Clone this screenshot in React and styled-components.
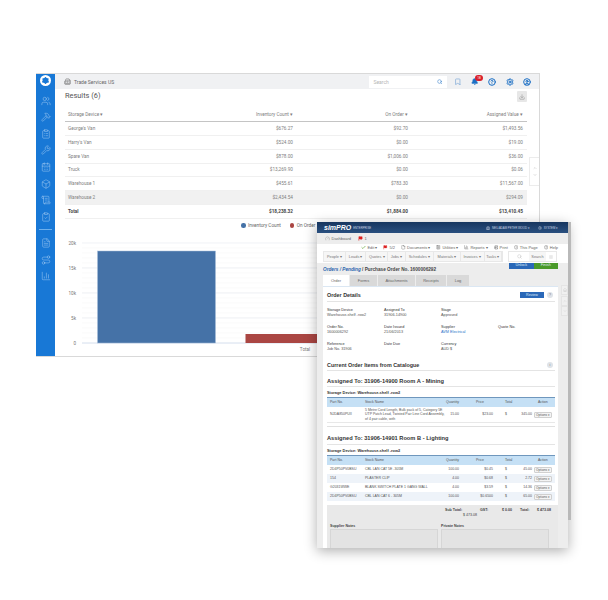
import React from 'react';
import styled, { createGlobalStyle } from 'styled-components';
import {
  Users, Hammer, ClipboardList, Wrench, CalendarDays, Box, ScrollText, ClipboardCheck,
  FileText, Route, BarChart3, Building2, Search, Bookmark, Bell, CircleHelp, Settings,
  CircleUser, Download, ChevronUp, ChevronDown, Home, Flag, Check, File, Printer, Info,
  Calculator, Gauge, Menu,
} from 'lucide-react';

const GlobalStyle = createGlobalStyle`
  html, body { margin: 0; padding: 0; background: #fff; }
  body { font-family: Roboto, "Liberation Sans", sans-serif; }
  #root { width: 608px; height: 600px; }
`;

const rows = [
  ["George's Van", '$676.27', '$92.70', '$1,493.56'],
  ["Harry's Van", '$524.00', '$0.00', '$19.00'],
  ['Spare Van', '$878.00', '$1,006.00', '$36.00'],
  ['Truck', '$13,269.90', '$0.00', '$0.06'],
  ['Warehouse 1', '$455.61', '$783.30', '$11,567.00'],
  ['Warehouse 2', '$2,434.54', '$0.00', '$294.09'],
];

const sideIcons = [Users, Hammer, ClipboardList, Wrench, CalendarDays, Box, ScrollText, ClipboardCheck];
const sideIconsLower = [FileText, Route, BarChart3];

const navItems = [
  ['People', 23], ['Leads', 21], ['Quotes', 23], ['Jobs', 18], ['Schedules', 30],
  ['Materials', 28], ['Invoices', 25], ['Tasks', 18],
];

const tabs = [
  ['Order', 26, true], ['Forms', 27], ['Attachments', 37], ['Receipts', 30], ['Log', 22],
];

const details = [
  ['Storage Device', 'Warehouse-shelf -row2'], ['Assigned To', '31906-14900'], ['Stage', 'Approved'], [null, null],
  ['Order No.', '1600006292'], ['Date Issued', '21/06/2013'], ['Supplier', 'AVM Electrical', true], ['Quote No.', ''],
  ['Reference', 'Job No. 31906'], ['Date Due', ''], ['Currency', 'AUD $'], [null, null],
];

const lighting = [
  ['2D4P50PV0BSU', 'CBL LAN CAT 5E -305M', '100.00', '$0.45', '45.00'],
  ['154', 'PLASTER CLIP', '4.00', '$0.68', '2.72'],
  ['G2031WWE', 'BLANK SWITCH PLATE 1 GANG WALL', '4.00', '$3.59', '14.36'],
  ['2D4P50PV0BSU', 'CBL LAN CAT 6 - 305M', '100.00', '$0.6500', '65.00'],
];

const Canvas = styled.div`
  position: relative;
  width: 608px;
  height: 600px;
  overflow: hidden;
`;

/* back window */
const BackWindow = styled.div`
  position: absolute;
  left: 36px;
  top: 73px;
  width: 504px;
  height: 284px;
  box-sizing: border-box;
  display: flex;
  background: #fff;
  border-top: 1px solid #d9d9d9;
  border-right: 1px solid #d9d9d9;
  border-bottom: 1px solid #d9d9d9;
`;

const Sidebar = styled.div`
  width: 19px;
  flex: none;
  background: #1878d6;
  display: flex;
  flex-direction: column;
  align-items: center;
  padding-top: 1px;
  gap: 6.6px;
  color: #b4d6f6;
`;

const Logo = styled.div`
  width: 11px;
  height: 11px;
  border-radius: 50%;
  background: #fff;
  display: flex;
  align-items: center;
  justify-content: center;
  margin-bottom: 3px;
  &::after {
    content: '';
    width: 7.5px;
    height: 7.5px;
    background: #1878d6;
    clip-path: polygon(50% 0, 66% 18%, 92% 22%, 88% 52%, 100% 74%, 66% 82%, 50% 100%, 34% 82%, 0 74%, 12% 52%, 8% 22%, 34% 18%);
  }
`;

const SideRule = styled.div`
  width: 13px;
  height: 1px;
  background: #6fb0ec;
  margin: 1px 0 1px;
`;

const Main = styled.div`
  flex: 1;
  min-width: 0;
  display: flex;
  flex-direction: column;
`;

const TopBar = styled.div`
  height: 15px;
  flex: none;
  background: #f0f1f3;
  display: flex;
  align-items: center;
  padding: 0 3px 0 9px;
  color: #555;
  font-size: 5px;
`;

const Company = styled.span`
  margin-left: 3px;
  flex: 1;
  color: #666;
`;

const SearchBox = styled.div`
  width: 78px;
  height: 12px;
  background: #fff;
  display: flex;
  align-items: center;
  justify-content: space-between;
  box-sizing: border-box;
  padding: 0 4px 0 5px;
  color: #b5b5b5;
  font-size: 5px;
  margin-right: 2px;
`;

const TopIcon = styled.span`
  position: relative;
  width: 17.5px;
  display: flex;
  justify-content: center;
  color: ${(p) => p.$color || '#1b6fc4'};
`;

const Badge = styled.span`
  position: absolute;
  left: 9px;
  top: -3px;
  width: 8px;
  height: 6px;
  border-radius: 3px;
  background: #d9202c;
  color: #fff;
  font-size: 3px;
  line-height: 6px;
  text-align: center;
`;

const Content = styled.div`
  padding: 0 12px 0 10px;
`;

const TitleRow = styled.div`
  height: 19px;
  display: flex;
  justify-content: space-between;
  align-items: flex-start;
`;

const Title = styled.div`
  font-size: 7.4px;
  color: #555;
  line-height: 14px;
`;

const IconButton = styled.div`
  width: 10px;
  height: 11px;
  margin-top: 2px;
  background: #e7e7e7;
  border-radius: 1px;
  color: #888;
  display: flex;
  align-items: center;
  justify-content: center;
`;

const TableRow = styled.div`
  display: grid;
  grid-template-columns: 1fr 115px 115px 115px;
  height: ${(p) => (p.$head ? '14px' : '13.85px')};
  box-sizing: border-box;
  align-items: center;
  font-size: 4.7px;
  color: ${(p) => (p.$total ? '#444' : '#808080')};
  font-weight: ${(p) => (p.$total ? 700 : 400)};
  background: ${(p) => (p.$hover ? '#f1f1f1' : '#fff')};
  border-bottom: ${(p) => (p.$head ? '1.5px solid #c4c4c4' : '1px solid #f0f0f0')};
`;

const Cell = styled.div`
  padding: 0 4px 0 3px;
  text-align: ${(p) => (p.$right ? 'right' : 'left')};
  white-space: nowrap;
`;

const Legend = styled.div`
  height: 13px;
  display: flex;
  align-items: center;
  gap: 9px;
  padding-left: 176px;
  font-size: 4.7px;
  color: #666;
`;

const LegendKey = styled.span`
  display: flex;
  align-items: center;
  gap: 2.5px;
  &::before {
    content: '';
    width: 4.5px;
    height: 4.5px;
    border-radius: 50%;
    background: ${(p) => p.$color};
  }
`;

const ChartSvg = styled.svg`
  display: block;
  margin-left: -10px;
  font-family: Roboto, sans-serif;
  font-size: 4.6px;
  fill: #777;
`;

const ScrollTabs = styled.div`
  position: absolute;
  left: 493px;
  top: 83px;
  width: 10px;
  height: 29px;
  box-sizing: border-box;
  background: #fff;
  border: 1px solid #ececec;
  border-right: 0;
  display: flex;
  flex-direction: column;
  align-items: center;
  justify-content: center;
  gap: 3px;
  color: #bbb;
`;

/* front window */
const FrontWindow = styled.div`
  position: absolute;
  left: 317px;
  top: 222px;
  width: 251px;
  height: 326px;
  background: #ededed;
  box-shadow: 0 3px 12px rgba(0, 0, 0, 0.32);
  display: flex;
  flex-direction: column;
  font-family: "Liberation Sans", Arial, sans-serif;
  color: #333;
  overflow: visible;
`;

const Scrollbar = styled.div`
  position: absolute;
  left: 251px;
  top: 0;
  bottom: 28px;
  width: 3px;
  background: #b9b9b9;
`;

const BrandBar = styled.div`
  height: 11px;
  flex: none;
  background: linear-gradient(#17365f, #2a5080);
  display: flex;
  align-items: center;
  padding: 0 10px 0 7px;
  color: #cdd8e6;
  font-size: 2.8px;
`;

const Brand = styled.span`
  font-size: 7px;
  font-weight: 700;
  font-style: italic;
  color: #fff;
  margin-right: 2px;
`;

const BrandRight = styled.span`
  margin-left: auto;
  display: flex;
  align-items: center;
  gap: 8px;
`;

const BrandItem = styled.span`
  display: flex;
  align-items: center;
  gap: 2px;
`;

const DashRow = styled.div`
  height: 11px;
  flex: none;
  display: flex;
  align-items: center;
  gap: 7px;
  padding-left: 8px;
  font-size: 4px;
  color: #666;
`;

const DashItem = styled.span`
  display: flex;
  align-items: center;
  gap: 1.5px;
`;

const ToolArea = styled.div`
  position: relative;
  height: 19px;
  flex: none;
  background: #fff;
  padding: 0 6px;
`;

const ToolRow = styled.div`
  height: 7px;
  display: flex;
  justify-content: flex-end;
  align-items: center;
  gap: 6px;
  padding-right: 4px;
  font-size: 4px;
  color: #666;
`;

const NavBar = styled.div`
  height: 11px;
  display: flex;
  align-items: center;
`;

const NavGroup = styled.div`
  display: flex;
  height: 11px;
  background: #f6f6f6;
  border: 1px solid #e8e8e8;
  box-sizing: border-box;
  width: 180px;
`;

const NavItem = styled.div`
  width: ${(p) => p.$w}px;
  border-right: 1px solid #e8e8e8;
  display: flex;
  align-items: center;
  justify-content: center;
  font-size: 3.9px;
  color: #777;
  white-space: nowrap;
`;

const NavSearch = styled.div`
  margin-left: 5px;
  width: 49px;
  height: 11px;
  box-sizing: border-box;
  border: 1px solid #e8e8e8;
  display: flex;
  align-items: center;
  font-size: 3.9px;
  color: #777;
`;

const NavSearchBox = styled.span`
  width: ${(p) => p.$w}px;
  display: flex;
  justify-content: center;
  color: #aaa;
`;

const NavSearchLabel = styled.span`
  flex: 1;
  text-align: center;
  background: #f6f6f6;
  line-height: 9px;
`;

const ActionButtons = styled.div`
  position: absolute;
  left: 192px;
  top: 19px;
  display: flex;
`;

const ActionButton = styled.div`
  width: 24.5px;
  height: 6px;
  background: ${(p) => p.$color};
  color: #dfe9f5;
  font-size: 3.8px;
  line-height: 5px;
  text-align: center;
`;

const Crumbs = styled.div`
  height: 12px;
  flex: none;
  padding-left: 6px;
  display: flex;
  align-items: center;
  font-size: 4.7px;
  font-weight: 700;
  color: #444;
`;

const CrumbLink = styled.span`
  color: #2a64ad;
  font-style: italic;
`;

const TabRow = styled.div`
  flex: none;
  height: 11px;
  margin-left: 6px;
  display: flex;
  gap: 1px;
`;

const Tab = styled.div`
  width: ${(p) => p.$w}px;
  background: ${(p) => (p.$on ? '#fff' : '#d9d9d9')};
  font-size: 4px;
  color: #666;
  display: flex;
  align-items: center;
  justify-content: center;
`;

const Panel = styled.div`
  flex: 1;
  min-height: 0;
  margin: 0 10px 0 6px;
  background: #fff;
  padding: 0 3px 0 4px;
  overflow: hidden;
  border-top: 1px solid #dbe7f3;
`;

const SectionHead = styled.div`
  display: flex;
  align-items: center;
  height: ${(p) => p.$h || 15}px;
  padding-top: ${(p) => p.$pt || 0}px;
  box-sizing: border-box;
  border-bottom: 1px solid #e4e4e4;
  font-weight: 700;
  font-size: ${(p) => p.$size || 5.4}px;
  color: #333;
`;

const HeadSpacer = styled.span`
  flex: 1;
`;

const ReviewButton = styled.span`
  width: 24px;
  height: 6px;
  background: #2a68b8;
  color: #dfe9f5;
  font-size: 3.6px;
  font-weight: 400;
  line-height: 6px;
  text-align: center;
  margin-right: 3px;
`;

const HelpDot = styled.span`
  width: 6px;
  height: 6px;
  border-radius: 50%;
  background: #dfe3e8;
  color: #777;
  font-size: 3.6px;
  font-weight: 400;
  line-height: 6px;
  text-align: center;
  margin-right: 2px;
`;

const DetailGrid = styled.div`
  display: grid;
  grid-template-columns: repeat(4, 57px);
  grid-auto-rows: 17px;
  padding-top: 6px;
  font-size: 3.8px;
  line-height: 5px;
  color: #444;
`;

const DetailLabel = styled.div`
  color: #333;
`;

const DetailValue = styled.div`
  color: ${(p) => (p.$link ? '#2a72c9' : '#555')};
`;

const StorageLine = styled.div`
  height: 10px;
  display: flex;
  align-items: center;
  font-size: 3.9px;
  font-weight: 700;
  color: #333;
`;

const ItemRow = styled.div`
  display: grid;
  grid-template-columns: 35px 81px 30px 29px 10px 19px 1fr;
  align-items: center;
  height: ${(p) => p.$h}px;
  box-sizing: border-box;
  padding-left: 3px;
  font-size: 3.5px;
  line-height: 4.6px;
  color: #555;
  background: ${(p) => (p.$head ? '#c5e0f5' : p.$alt ? '#eef3f9' : '#fff')};
  border-top: ${(p) => (p.$head ? '1px solid #6f97bd' : '0')};
`;

const RightCell = styled.span`
  text-align: right;
  padding-right: ${(p) => p.$pr ?? 4}px;
`;

const LeftCell = styled.span`
  padding-left: ${(p) => p.$pl ?? 0}px;
`;

const OptionsButton = styled.span`
  justify-self: end;
  width: 18px;
  height: 6px;
  margin-right: 3px;
  border: 1px solid #d0d0d0;
  box-sizing: border-box;
  background: #f4f4f4;
  border-radius: 1px;
  text-align: center;
  font-size: 3.2px;
  line-height: 4px;
`;

const GroupEnd = styled.div`
  height: 3px;
  border-top: 1px solid #e8e8e8;
  border-bottom: 1.5px solid #e0e0e0;
`;

const Summary = styled.div`
  margin: 4px -3px 0 0;
  background: #e9e9e9;
  padding: 3px 3px 0 3px;
  height: 60px;
  font-size: 3.6px;
  font-weight: 700;
  color: #444;
  white-space: nowrap;
`;

const Totals = styled.div`
  display: grid;
  grid-template-columns: 115px 35px 22px 18px 17px 1fr;
  line-height: 5px;
`;

const GrandTotal = styled.div`
  padding-left: 133px;
  line-height: 4px;
  font-weight: 400;
`;

const NotesGrid = styled.div`
  display: grid;
  grid-template-columns: 108px 108px;
  gap: 3px;
  margin-top: 7px;
  line-height: 5px;
`;

const NoteBox = styled.div`
  height: 30px;
  background: #e3e3e3;
  border: 1px solid #d6d6d6;
`;

const SideTabs = styled.div`
  position: absolute;
  left: 244px;
  top: 63px;
  width: 7px;
  display: flex;
  flex-direction: column;
  gap: 0.5px;
`;

const SideTab = styled.div`
  height: 10px;
  box-sizing: border-box;
  background: #f0f0f0;
  border: 1px solid #e4e4e4;
  display: flex;
  align-items: center;
  justify-content: center;
  color: #c4c4c4;
`;

const ItemsHead = () => (
  <ItemRow $head $h={10}>
    <span>Part No.</span>
    <span>Stock Name</span>
    <span>Quantity</span>
    <span>Price</span>
    <span>Total</span>
    <span />
    <LeftCell $pl={4}>Action</LeftCell>
  </ItemRow>
);

const ChartArea = () => {
  const minor = [];
  for (let y = 5; y < 100; y += 5) minor.push(y);
  return (
    <ChartSvg width="494" height="126" viewBox="0 0 494 126">
      {minor.map((y) => (
        <line key={y} x1="27" x2="494" y1={y + 11} y2={y + 11} stroke="#f6f6f6" strokeWidth="0.6" />
      ))}
      {[0, 25, 50, 75].map((y) => (
        <line key={y} x1="27" x2="494" y1={y + 11} y2={y + 11} stroke="#e9edf2" strokeWidth="0.7" />
      ))}
      <line x1="27" x2="494" y1="111" y2="111" stroke="#c9d6e8" strokeWidth="0.8" />
      <rect x="42.5" y="19" width="118" height="92" fill="#4572a7" stroke="#a9c0da" strokeWidth="0.5" />
      <rect x="190.5" y="102" width="118" height="9" fill="#aa4643" />
      {[['20k', 0], ['15k', 25], ['10k', 50], ['5k', 75], ['0', 100]].map(([t, y]) => (
        <text key={t} x="21" y={y + 12.5} textAnchor="end">{t}</text>
      ))}
      <text x="250" y="118.5" textAnchor="middle">Total</text>
    </ChartSvg>
  );
};

const App = () => (
  <Canvas>
    <GlobalStyle />
    <BackWindow>
      <Sidebar>
        <Logo />
        {sideIcons.map((Icon, i) => <Icon key={i} size={10} strokeWidth={1.1} />)}
        <SideRule />
        {sideIconsLower.map((Icon, i) => <Icon key={i} size={10} strokeWidth={1.1} />)}
      </Sidebar>
      <Main>
        <TopBar>
          <Building2 size={7} strokeWidth={1.6} />
          <Company>Trade Services US</Company>
          <SearchBox>
            Search
            <Search size={5.5} color="#1b6fc4" strokeWidth={2} />
          </SearchBox>
          <TopIcon $color="#7da9d8"><Bookmark size={7.5} strokeWidth={2.2} /></TopIcon>
          <TopIcon>
            <Bell size={7.5} strokeWidth={2.4} fill="#1b6fc4" />
            <Badge>18</Badge>
          </TopIcon>
          <TopIcon><CircleHelp size={8} strokeWidth={3} /></TopIcon>
          <TopIcon><Settings size={8} strokeWidth={3} /></TopIcon>
          <TopIcon><CircleUser size={8} strokeWidth={3} /></TopIcon>
        </TopBar>
        <Content>
          <TitleRow>
            <Title>Results (6)</Title>
            <IconButton><Download size={6} strokeWidth={2} /></IconButton>
          </TitleRow>
          <TableRow $head>
            <Cell>Storage Device ▾</Cell>
            <Cell $right>Inventory Count ▾</Cell>
            <Cell $right>On Order ▾</Cell>
            <Cell $right>Assigned Value ▾</Cell>
          </TableRow>
          {rows.map((r) => (
            <TableRow key={r[0]} $hover={r[0] === 'Warehouse 2'}>
              <Cell>{r[0]}</Cell>
              <Cell $right>{r[1]}</Cell>
              <Cell $right>{r[2]}</Cell>
              <Cell $right>{r[3]}</Cell>
            </TableRow>
          ))}
          <TableRow $total>
            <Cell>Total</Cell>
            <Cell $right>$18,238.32</Cell>
            <Cell $right>$1,884.00</Cell>
            <Cell $right>$13,410.45</Cell>
          </TableRow>
          <Legend>
            <LegendKey $color="#4572a7">Inventory Count</LegendKey>
            <LegendKey $color="#aa4643">On Order</LegendKey>
          </Legend>
          <ChartArea />
        </Content>
        <ScrollTabs>
          <ChevronUp size={4} strokeWidth={3} />
          <ChevronDown size={4} strokeWidth={3} />
        </ScrollTabs>
      </Main>
    </BackWindow>

    <FrontWindow>
      <Scrollbar />
      <BrandBar>
        <Brand>simPRO</Brand> ENTERPRISE
        <BrandRight>
          <BrandItem><Building2 size={4} /> NEIL/ADAM PETER WOOD ▾</BrandItem>
          <BrandItem><Settings size={4} /> SYSTEM ▾</BrandItem>
        </BrandRight>
      </BrandBar>
      <DashRow>
        <DashItem><Gauge size={5} strokeWidth={1.2} /> Dashboard</DashItem>
        <DashItem><Flag size={5} color="#d22" fill="#d22" /> 1</DashItem>
      </DashRow>
      <ToolArea>
        <ToolRow>
          <DashItem><Check size={5} color="#5aa02c" strokeWidth={3} /> Edit ▾</DashItem>
          <DashItem><Flag size={4.5} color="#d22" fill="#d22" /> 5/2</DashItem>
          <DashItem><File size={4.5} /> Documents ▾</DashItem>
          <DashItem><Calculator size={4.5} /> Utilities ▾</DashItem>
          <DashItem><BarChart3 size={4.5} /> Reports ▾</DashItem>
          <DashItem><Printer size={4.5} /> Print</DashItem>
          <DashItem><Info size={4.5} /> This Page</DashItem>
          <DashItem><CircleHelp size={4.5} /> Help</DashItem>
        </ToolRow>
        <NavBar>
          <NavGroup>
            {navItems.map(([label, w]) => (
              <NavItem key={label} $w={w}>{label} ▾</NavItem>
            ))}
          </NavGroup>
          <NavSearch>
            <NavSearchBox $w={20}><Search size={5} strokeWidth={1.5} /></NavSearchBox>
            <NavSearchLabel>Search</NavSearchLabel>
            <NavSearchBox $w={10}><Menu size={4} /></NavSearchBox>
          </NavSearch>
        </NavBar>
        <ActionButtons>
          <ActionButton $color="#2a68b8">Unlock</ActionButton>
          <ActionButton $color="#4a9a2a">Finish</ActionButton>
        </ActionButtons>
      </ToolArea>
      <Crumbs>
        <CrumbLink>Orders / Pending</CrumbLink>&nbsp;/ Purchase Order No. 1600006292
      </Crumbs>
      <TabRow>
        {tabs.map(([label, w, on]) => (
          <Tab key={label} $w={w} $on={on}>{label}</Tab>
        ))}
      </TabRow>
      <Panel>
        <SectionHead $h={15} $pt={1}>
          Order Details
          <HeadSpacer />
          <ReviewButton>Review</ReviewButton>
          <HelpDot>?</HelpDot>
        </SectionHead>
        <DetailGrid>
          {details.map(([label, value, link], i) => (
            <div key={i}>
              <DetailLabel>{label}</DetailLabel>
              <DetailValue $link={link}>{value}</DetailValue>
            </div>
          ))}
        </DetailGrid>
        <SectionHead $h={12}>
          Current Order Items from Catalogue
          <HeadSpacer />
          <HelpDot>i</HelpDot>
        </SectionHead>
        <SectionHead $h={16} $size={5.7} $pt={4}>Assigned To: 31906-14900 Room A - Mining</SectionHead>
        <StorageLine>Storage Device: Warehouse-shelf -row2</StorageLine>
        <ItemsHead />
        <ItemRow $h={15}>
          <span>NJDA850PUII</span>
          <span>5 Metre Cord Length, Bulk pack of 5, Category 5E UTP Patch Lead, Twisted Pair Line Cord Assembly, of 4 pair cable, with</span>
          <RightCell $pr={17}>15.00</RightCell>
          <RightCell $pr={12}>$23.00</RightCell>
          <LeftCell>$</LeftCell>
          <RightCell $pr={2}>345.00</RightCell>
          <OptionsButton>Options ▾</OptionsButton>
        </ItemRow>
        <GroupEnd />
        <SectionHead $h={18} $size={5.7} $pt={5}>Assigned To: 31906-14901 Room B - Lighting</SectionHead>
        <StorageLine>Storage Device: Warehouse-shelf -row2</StorageLine>
        <ItemsHead />
        {lighting.map((r, i) => (
          <ItemRow key={r[1]} $h={9} $alt={i % 2 === 1}>
            <span>{r[0]}</span>
            <span>{r[1]}</span>
            <RightCell $pr={17}>{r[2]}</RightCell>
            <RightCell $pr={12}>{r[3]}</RightCell>
            <LeftCell>$</LeftCell>
            <RightCell $pr={2}>{r[4]}</RightCell>
            <OptionsButton>Options ▾</OptionsButton>
          </ItemRow>
        ))}
        <Summary>
          <Totals>
            <span />
            <span>Sub Total:</span>
            <span>GST:</span>
            <span>$ 0.00</span>
            <span>Total:</span>
            <span>$ 473.08</span>
          </Totals>
          <GrandTotal>$ 473.08</GrandTotal>
          <NotesGrid>
            <div>
              Supplier Notes
              <NoteBox />
            </div>
            <div>
              Private Notes
              <NoteBox />
            </div>
          </NotesGrid>
        </Summary>
      </Panel>
      <SideTabs>
        <SideTab><Home size={4} /></SideTab>
        <SideTab><ChevronUp size={4} /></SideTab>
        <SideTab><ChevronDown size={4} /></SideTab>
      </SideTabs>
    </FrontWindow>
  </Canvas>
);

export default App;
